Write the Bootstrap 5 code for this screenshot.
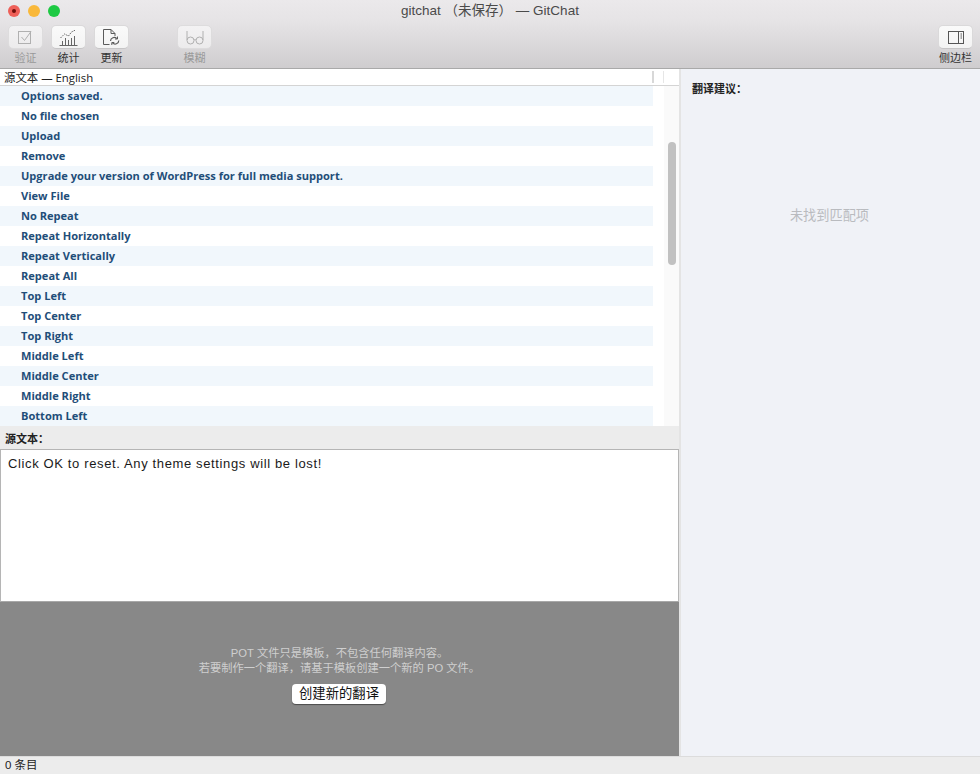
<!DOCTYPE html>
<html lang="zh">
<head>
<meta charset="utf-8">
<title>gitchat</title>
<link href="https://cdn.jsdelivr.net/npm/bootstrap@5.3.0/dist/css/bootstrap.min.css" rel="stylesheet">
<style>
html,body{height:774px;overflow:hidden}
body{width:980px;background:#fff;color:#111;font-family:"Open Sans","Noto Sans CJK SC",sans-serif;font-size:11px;line-height:1.2}
.app-top{height:69px;flex:none;background:linear-gradient(#ebe9eb 0,#e6e4e6 30%,#cfcdcf 100%);border-bottom:1px solid #a9a9a9;position:relative}
.title-row{height:22px;justify-content:center;font-family:"Liberation Sans","Noto Sans CJK SC",sans-serif;font-size:13.5px;color:#4a4a4a}
.lights{position:absolute;left:8px;top:5px}
.light{width:12px;height:12px;border-radius:50%;display:block}
.tl-r{background:#ee5f58;position:relative}
.tl-r::after{content:"";position:absolute;left:4px;top:4px;width:4px;height:4px;border-radius:50%;background:#6d0e0a}
.tl-y{background:#f9b83a}
.tl-g{background:#1dc943}
.tools{height:46px;padding:3px 8px 0}
.tool{width:35px;font-size:11px;color:#333;text-align:center;font-family:"Liberation Sans","Noto Sans CJK SC",sans-serif;line-height:14px}
.tool-off{color:#999}
.tool-box{display:flex;align-items:center;justify-content:center;width:35px;height:24px;margin-bottom:2px;background:linear-gradient(#fafafa,#f3f3f3);border-radius:5px;border:1px solid #dad9da;border-bottom-color:#c6c5c6}
.tool-off .tool-box{background:linear-gradient(#f3f2f3,#ecebec);border-color:#dddcdd}
.tool-gap{margin-left:48px}
.main-area{height:687px}
.left-pane{width:679px;flex:none}
.split-line{width:2px;flex:none;background:#e4e4e4}
.right-pane{flex:1;background:#f0f2f7;padding:13px 11px}
.side-title{font-family:"Liberation Sans","Noto Sans CJK SC",sans-serif;font-size:11px;font-weight:700;color:#222;line-height:14px}
.no-match{margin-top:112px;text-align:center;font-size:13.200px;color:#b9bbbf;font-family:"Liberation Sans","Noto Sans CJK SC",sans-serif;padding-right:2px}
.list-head{height:17px;border-bottom:1px solid #d4d4d4;background:#fff;font-size:11.400px;line-height:17px;padding-left:4px;position:relative;color:#222}
.head-tick{position:absolute;top:2px;width:2px;height:12px;background:#d8d8d8}
.tick-a{left:652px}
.tick-b{left:663px;width:1px;background:#e6e6e6}
.list-wrap{height:340px;overflow:hidden}
.rows-col{width:653px;flex:none}
.str-row{height:20px;line-height:20px;padding-left:21px;font-weight:700;color:#1f4e79;font-size:11.070px;white-space:nowrap}
.str-row:nth-child(odd){background:#f1f7fc}
.scroll-track{flex:1;margin-left:11px;background:#fafafa;position:relative}
.scroll-thumb{position:absolute;left:4px;top:56px;width:8px;height:123px;border-radius:4px;background:#c1c1c1}
.src-label{height:23px;background:#ececec;padding:6px 0 0 5px;font-family:"Liberation Sans","Noto Sans CJK SC",sans-serif;font-weight:700;font-size:11px;line-height:14px;color:#222}
.src-box{height:153px;border:1px solid #b5b5b5;border-bottom-color:#a8a8a8;background:#fff;padding:6px 7px;font-family:"Liberation Sans",sans-serif;font-size:13px;letter-spacing:.63px;line-height:16px;color:#1a1a1a}
.pot-area{height:154px;background:#888;color:#cfcfcf;font-size:11.250px;line-height:14.500px;text-align:center;padding-top:44px;font-family:"Liberation Sans","Noto Sans CJK SC",sans-serif}
.pot-btn{display:inline-block;margin:9px 1px 0 0;background:#fff;color:#111;border-radius:4px;font-size:13.330px;line-height:19px;height:20px;padding:0 7px;box-shadow:0 1px 1px rgba(0,0,0,.45)}
.status-row{height:18px;background:#ececec;border-top:1px solid #dcdcdc;padding-left:5px;line-height:17px;font-size:11.500px;color:#222;font-family:"Liberation Sans","Noto Sans CJK SC",sans-serif}
</style>
</head>
<body class="d-flex flex-column">
<header class="app-top">
  <div class="lights d-flex gap-2"><span class="light tl-r"></span><span class="light tl-y"></span><span class="light tl-g"></span></div>
  <div class="title-row d-flex align-items-center">gitchat （未保存） — GitChat</div>
  <div class="tools d-flex">
    <div class="tool tool-off"><span class="tool-box"><svg width="15" height="15" viewBox="0 0 15 15" fill="none" stroke="#b0b0b0"><rect x=".5" y="1.500" width="12" height="12"/><path d="M3.500 7l3 3.500L13 1.500"/></svg></span>验证</div>
    <div class="tool ms-2"><span class="tool-box"><svg width="19" height="17" viewBox="0 0 19 17" fill="none" stroke="#666"><path d="M.5 16.500h18M3.500 16v-4M6.500 16v-7M9.500 16v-5M12.500 16V9M15.500 16V7"/><path d="M1.500 9l4-4 4 2 3-4 4-2" stroke-dasharray="1.500 1"/></svg></span>统计</div>
    <div class="tool ms-2"><span class="tool-box"><svg width="17" height="18" viewBox="0 0 17 18" fill="none" stroke="#5a5a5a"><path d="M6.500 16.500H.5v-15h7.500l4 4v2.500M8 1.500v4h4"/><path d="M7.500 13a3.600 3.600 0 0 1 6.300-2.300M15.800 12.500a3.600 3.600 0 0 1-6.300 2.300" stroke-width="1.200"/><path d="M14.500 8.500v2.500H12M8.800 17v-2.500h2.500"/></svg></span>更新</div>
    <div class="tool tool-off tool-gap"><span class="tool-box"><svg width="18" height="15" viewBox="0 0 18 15" fill="none" stroke="#b0b0b0"><circle cx="4.500" cy="10.500" r="3.500"/><circle cx="13.500" cy="10.500" r="3.500"/><path d="M8 10c.7-.6 1.300-.6 2 0M1 10V1M17 10V1"/></svg></span>模糊</div>
    <div class="tool ms-auto" style="margin-right:-1px"><span class="tool-box"><svg width="16" height="13" viewBox="0 0 16 13" fill="none" stroke="#555"><rect x=".5" y=".5" width="15" height="12"/><path d="M10.500 .5v12M12.500 3h1.500M12.500 5h1.500M12.500 7h1.500"/></svg></span>侧边栏</div>
  </div>
</header>
<main class="main-area d-flex">
  <section class="left-pane d-flex flex-column">
    <div class="list-head">源文本 — English<span class="head-tick tick-a"></span><span class="head-tick tick-b"></span></div>
    <div class="list-wrap d-flex">
      <div class="rows-col">
        <div class="str-row">Options saved.</div>
        <div class="str-row">No file chosen</div>
        <div class="str-row">Upload</div>
        <div class="str-row">Remove</div>
        <div class="str-row">Upgrade your version of WordPress for full media support.</div>
        <div class="str-row">View File</div>
        <div class="str-row">No Repeat</div>
        <div class="str-row">Repeat Horizontally</div>
        <div class="str-row">Repeat Vertically</div>
        <div class="str-row">Repeat All</div>
        <div class="str-row">Top Left</div>
        <div class="str-row">Top Center</div>
        <div class="str-row">Top Right</div>
        <div class="str-row">Middle Left</div>
        <div class="str-row">Middle Center</div>
        <div class="str-row">Middle Right</div>
        <div class="str-row">Bottom Left</div>
      </div>
      <div class="scroll-track"><div class="scroll-thumb"></div></div>
    </div>
    <div class="src-label">源文本：</div>
    <div class="src-box">Click OK to reset. Any theme settings will be lost!</div>
    <div class="pot-area">POT 文件只是模板，不包含任何翻译内容。<br>若要制作一个翻译，请基于模板创建一个新的 PO 文件。<br><span class="pot-btn">创建新的翻译</span></div>
  </section>
  <div class="split-line"></div>
  <aside class="right-pane">
    <div class="side-title">翻译建议：</div>
    <div class="no-match">未找到匹配项</div>
  </aside>
</main>
<footer class="status-row">0 条目</footer>
</body>
</html>
